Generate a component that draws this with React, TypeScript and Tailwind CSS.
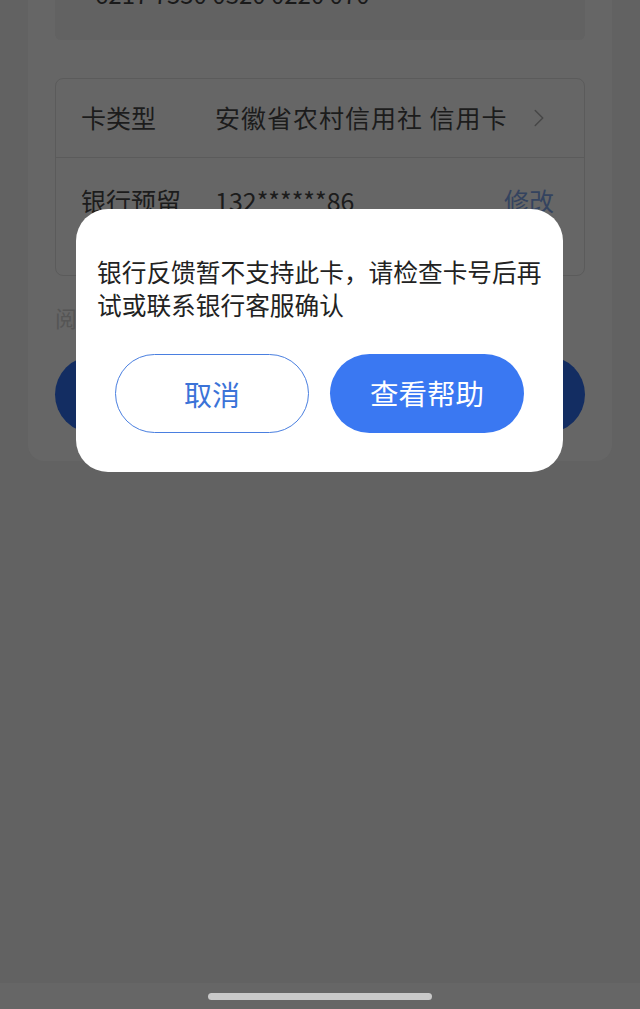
import { ChevronRight } from "lucide-react";

const font = { fontFamily: '"Noto Sans CJK SC", "Noto Sans", sans-serif' };

const CardForm = () => (
  <div className="mx-[28px] bg-[#666666] rounded-b-[16px] px-[27px] pb-[28px]">
    <div className="h-[40px] bg-[#626262] rounded-b-[6px] overflow-hidden">
      <div className="-mt-[20px] pl-[40px] text-[24px] leading-[28px] text-[#1a1a1a] whitespace-nowrap">
        6217 7550 0320 0220 070
      </div>
    </div>

    <div className="mt-[38px] border border-[#5b5b5b] rounded-[8px]">
      <div className="h-[79px] flex items-center pl-[25px] pr-[30px] border-b border-[#5b5b5b]">
        <span className="w-[134px] text-[25px] text-[#1c1c1c]">卡类型</span>
        <span className="flex-1 text-[25px] tracking-[1px] text-[#1c1c1c]">安徽省农村信用社 信用卡</span>
        <ChevronRight className="w-[30px] h-[30px] text-[#474747]" strokeWidth={1.2} />
      </div>
      <div className="h-[117px] flex items-start pl-[25px] pr-[30px] pt-[26px]">
        <span className="w-[134px] text-[25px] leading-[33px] text-[#1c1c1c]">
          银行预留
          <br />
          手机号
        </span>
        <span className="flex-1 text-[25px] leading-[33px] text-[#1c1c1c]">132******86</span>
        <span className="text-[25px] leading-[33px] text-[#34435f]">修改</span>
      </div>
    </div>

    <div className="mt-[26px] text-[22px] leading-[30px] text-[#555555]">阅读并同意《用户服务协议》</div>

    <div className="mt-[24px] h-[77px] rounded-full bg-[#132d62]" />
  </div>
);

const Dialog = () => (
  <div className="fixed inset-0 pointer-events-none">
    <div className="ml-[76px] mt-[209px] w-[487px] bg-white rounded-[32px] pt-[46px] pb-[39px] pointer-events-auto">
      <p className="px-[21px] text-[24.7px] leading-[33px] text-[#222222] whitespace-nowrap">
        银行反馈暂不支持此卡，请检查卡号后再
        <br />
        试或联系银行客服确认
      </p>
      <div className="mt-[33px] flex gap-[21px] px-[39px]">
        <button className="w-[194px] h-[79px] rounded-full border-[1.5px] border-[#4a7fe0] text-[28px] text-[#3b73d8]">
          取消
        </button>
        <button className="w-[194px] h-[79px] rounded-full bg-[#3a78f2] text-[28.5px] text-white">
          查看帮助
        </button>
      </div>
    </div>
  </div>
);

export default function App() {
  return (
    <div className="relative w-full h-[1009px] bg-[#626262] flex flex-col overflow-hidden" style={font}>
      <CardForm />
      <div className="flex-1" />
      <div className="h-[26px] bg-[#666666] flex justify-center pt-[10px]">
        <div className="w-[224px] h-[7px] rounded-full bg-[#c9c9c9]" />
      </div>
      <Dialog />
    </div>
  );
}
